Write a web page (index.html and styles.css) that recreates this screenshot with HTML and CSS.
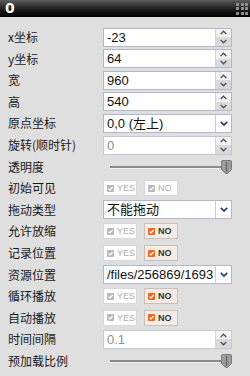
FILE: index.html
```
<!DOCTYPE html>
<html>
<head>
<meta charset="utf-8">
<link rel="stylesheet" href="styles.css">
</head>
<body>
<div class="header">
  <span class="title">0</span>
  <span class="grid-icon"><i></i><i></i><i></i><i></i><i></i><i></i><i></i><i></i><i></i></span>
</div>
<div class="form">
  <div class="lbl">x坐标</div>
  <div class="box"><span class="val">-23</span><span class="spin"><span class="up"><svg width="7" height="5" viewBox="0 0 7 5"><path d="M0.7 4 L3.5 1.2 L6.3 4" /></svg></span><span class="down"><svg width="7" height="5" viewBox="0 0 7 5"><path d="M0.7 1 L3.5 3.8 L6.3 1" /></svg></span></span></div>

  <div class="lbl">y坐标</div>
  <div class="box"><span class="val">64</span><span class="spin"><span class="up"><svg width="7" height="5" viewBox="0 0 7 5"><path d="M0.7 4 L3.5 1.2 L6.3 4" /></svg></span><span class="down"><svg width="7" height="5" viewBox="0 0 7 5"><path d="M0.7 1 L3.5 3.8 L6.3 1" /></svg></span></span></div>

  <div class="lbl">宽</div>
  <div class="box"><span class="val">960</span><span class="spin"><span class="up"><svg width="7" height="5" viewBox="0 0 7 5"><path d="M0.7 4 L3.5 1.2 L6.3 4" /></svg></span><span class="down"><svg width="7" height="5" viewBox="0 0 7 5"><path d="M0.7 1 L3.5 3.8 L6.3 1" /></svg></span></span></div>

  <div class="lbl">高</div>
  <div class="box"><span class="val">540</span><span class="spin"><span class="up"><svg width="7" height="5" viewBox="0 0 7 5"><path d="M0.7 4 L3.5 1.2 L6.3 4" /></svg></span><span class="down"><svg width="7" height="5" viewBox="0 0 7 5"><path d="M0.7 1 L3.5 3.8 L6.3 1" /></svg></span></span></div>

  <div class="lbl">原点坐标</div>
  <div class="box"><span class="val">0,0 (左上)</span><span class="arrow"><svg width="8" height="5" viewBox="0 0 8 5"><path d="M0.8 0.8 L4 4 L7.2 0.8" /></svg></span></div>

  <div class="lbl">旋转(顺时针)</div>
  <div class="box disabled"><span class="val">0</span><span class="spin"><span class="up"><svg width="7" height="5" viewBox="0 0 7 5"><path d="M0.7 4 L3.5 1.2 L6.3 4" /></svg></span><span class="down"><svg width="7" height="5" viewBox="0 0 7 5"><path d="M0.7 1 L3.5 3.8 L6.3 1" /></svg></span></span></div>

  <div class="lbl">透明度</div>
  <div class="slider"><span class="track"></span><svg class="handle" width="11" height="14" viewBox="0 0 11 14"><path d="M1.5 0.5 H9.5 Q10.5 0.5 10.5 1.5 V9.5 L6.2 13.5 H4.8 L0.5 9.5 V1.5 Q0.5 0.5 1.5 0.5 Z" /><line x1="5.5" y1="2" x2="5.5" y2="12" /></svg></div>

  <div class="lbl">初始可见</div>
  <div class="toggles">
    <span class="tg"><svg class="ck" width="7" height="7" viewBox="0 0 7 7"><rect width="7" height="7" rx="1"/><path d="M1.5 3.6 L3 5 L5.6 2"/></svg>YES</span>
    <span class="tg"><svg class="ck" width="7" height="7" viewBox="0 0 7 7"><rect width="7" height="7" rx="1"/><path d="M1.5 3.6 L3 5 L5.6 2"/></svg>NO</span>
  </div>

  <div class="lbl">拖动类型</div>
  <div class="box"><span class="val">不能拖动</span><span class="arrow"><svg width="8" height="5" viewBox="0 0 8 5"><path d="M0.8 0.8 L4 4 L7.2 0.8" /></svg></span></div>

  <div class="lbl">允许放缩</div>
  <div class="toggles">
    <span class="tg"><svg class="ck" width="7" height="7" viewBox="0 0 7 7"><rect width="7" height="7" rx="1"/><path d="M1.5 3.6 L3 5 L5.6 2"/></svg>YES</span>
    <span class="tg on"><svg class="ck" width="7" height="7" viewBox="0 0 7 7"><rect width="7" height="7" rx="1"/><path d="M1.5 3.6 L3 5 L5.6 2"/></svg>NO</span>
  </div>

  <div class="lbl">记录位置</div>
  <div class="toggles">
    <span class="tg"><svg class="ck" width="7" height="7" viewBox="0 0 7 7"><rect width="7" height="7" rx="1"/><path d="M1.5 3.6 L3 5 L5.6 2"/></svg>YES</span>
    <span class="tg on"><svg class="ck" width="7" height="7" viewBox="0 0 7 7"><rect width="7" height="7" rx="1"/><path d="M1.5 3.6 L3 5 L5.6 2"/></svg>NO</span>
  </div>

  <div class="lbl">资源位置</div>
  <div class="box"><span class="val">/files/256869/1693</span><span class="arrow"><svg width="8" height="5" viewBox="0 0 8 5"><path d="M0.8 0.8 L4 4 L7.2 0.8" /></svg></span></div>

  <div class="lbl">循环播放</div>
  <div class="toggles">
    <span class="tg"><svg class="ck" width="7" height="7" viewBox="0 0 7 7"><rect width="7" height="7" rx="1"/><path d="M1.5 3.6 L3 5 L5.6 2"/></svg>YES</span>
    <span class="tg on"><svg class="ck" width="7" height="7" viewBox="0 0 7 7"><rect width="7" height="7" rx="1"/><path d="M1.5 3.6 L3 5 L5.6 2"/></svg>NO</span>
  </div>

  <div class="lbl">自动播放</div>
  <div class="toggles">
    <span class="tg"><svg class="ck" width="7" height="7" viewBox="0 0 7 7"><rect width="7" height="7" rx="1"/><path d="M1.5 3.6 L3 5 L5.6 2"/></svg>YES</span>
    <span class="tg on"><svg class="ck" width="7" height="7" viewBox="0 0 7 7"><rect width="7" height="7" rx="1"/><path d="M1.5 3.6 L3 5 L5.6 2"/></svg>NO</span>
  </div>

  <div class="lbl">时间间隔</div>
  <div class="box disabled"><span class="val">0.1</span><span class="spin"><span class="up"><svg width="7" height="5" viewBox="0 0 7 5"><path d="M0.7 4 L3.5 1.2 L6.3 4" /></svg></span><span class="down"><svg width="7" height="5" viewBox="0 0 7 5"><path d="M0.7 1 L3.5 3.8 L6.3 1" /></svg></span></span></div>

  <div class="lbl">预加载比例</div>
  <div class="slider"><span class="track"></span><svg class="handle" width="11" height="14" viewBox="0 0 11 14"><path d="M1.5 0.5 H9.5 Q10.5 0.5 10.5 1.5 V9.5 L6.2 13.5 H4.8 L0.5 9.5 V1.5 Q0.5 0.5 1.5 0.5 Z" /><line x1="5.5" y1="2" x2="5.5" y2="12" /></svg></div>
</div>
</body>
</html>
```
FILE: styles.css
```
* { box-sizing: border-box; }
html, body { margin: 0; padding: 0; }
body {
  width: 250px;
  height: 376px;
  overflow: hidden;
  background: #dfdfdf;
  font-family: "Noto Sans CJK SC", "Noto Sans", sans-serif;
}
.header {
  height: 17px;
  background: linear-gradient(#5c5c5c, #1c1c1c 55%, #000);
  display: flex;
  align-items: center;
  justify-content: space-between;
  padding: 0 2px 0 5px;
}
.title {
  color: #fff;
  font: bold 14px "DejaVu Sans", sans-serif;
  line-height: 17px;
}
.grid-icon {
  display: grid;
  grid-template-columns: repeat(3, 3px);
  grid-auto-rows: 3px;
  gap: 1.5px;
}
.grid-icon i {
  background: #8c8c8c;
}
.form {
  padding: 9.3px 0 0 8px;
  display: grid;
  grid-template-columns: 95px 129px;
  grid-auto-rows: 21.6px;
  align-items: center;
}
.lbl {
  font-size: 12px;
  line-height: 1;
  color: #1a1a1a;
  white-space: nowrap;
}
.box {
  height: 19px;
  border: 1px solid #b2b8cb;
  background: #fff;
  display: flex;
}
.val {
  flex: 1;
  min-width: 0;
  overflow: hidden;
  white-space: nowrap;
  padding-left: 3px;
  font: 13px "Liberation Sans", "Noto Sans CJK SC", sans-serif;
  line-height: 17px;
  color: #111;
}
.disabled { border-color: #c5c9d5; }
.disabled .val { color: #8e8e8e; }
.spin {
  width: 16px;
  border-left: 1px solid #d3d6de;
  display: flex;
  flex-direction: column;
}
.spin .up, .spin .down {
  flex: 1;
  display: flex;
  align-items: center;
  justify-content: center;
}
.spin .up { background: #f3f3f3; }
.spin .down { background: #dadada; }
.spin path {
  fill: none;
  stroke: #4e5566;
  stroke-width: 1.4;
}
.arrow {
  width: 16px;
  border-left: 1px solid #c8ccd8;
  display: flex;
  align-items: center;
  justify-content: center;
  background: #fff;
}
.arrow path {
  fill: none;
  stroke: #1f3d78;
  stroke-width: 1.7;
}
.slider {
  display: flex;
  align-items: center;
  padding-left: 7px;
}
.track {
  width: 114px;
  height: 2px;
  background: #8a8a8a;
  box-shadow: 0 1px 0 #f2f2f2;
}
.handle {
  margin-left: -3px;
}
.handle path {
  fill: #9c9c9c;
  stroke: #7c7c7c;
  stroke-width: 1;
}
.handle line {
  stroke: #6a6a6a;
  stroke-width: 1.4;
}
.toggles {
  display: flex;
  gap: 7px;
}
.tg {
  width: 34px;
  height: 16px;
  border: 1px solid #d8d8d8;
  background: #fff;
  display: flex;
  align-items: center;
  padding-left: 3px;
  gap: 3px;
  font: 9px "Liberation Sans", sans-serif;
  color: #aeaeae;
}
.ck rect { fill: #b9b9b9; }
.ck path { fill: none; stroke: #fff; stroke-width: 1.2; }
.tg.on {
  background: #f3ebe6;
  border-color: #cdbfb8;
  color: #333;
  font-weight: bold;
}
.tg.on .ck rect { fill: #f2661d; }
```
